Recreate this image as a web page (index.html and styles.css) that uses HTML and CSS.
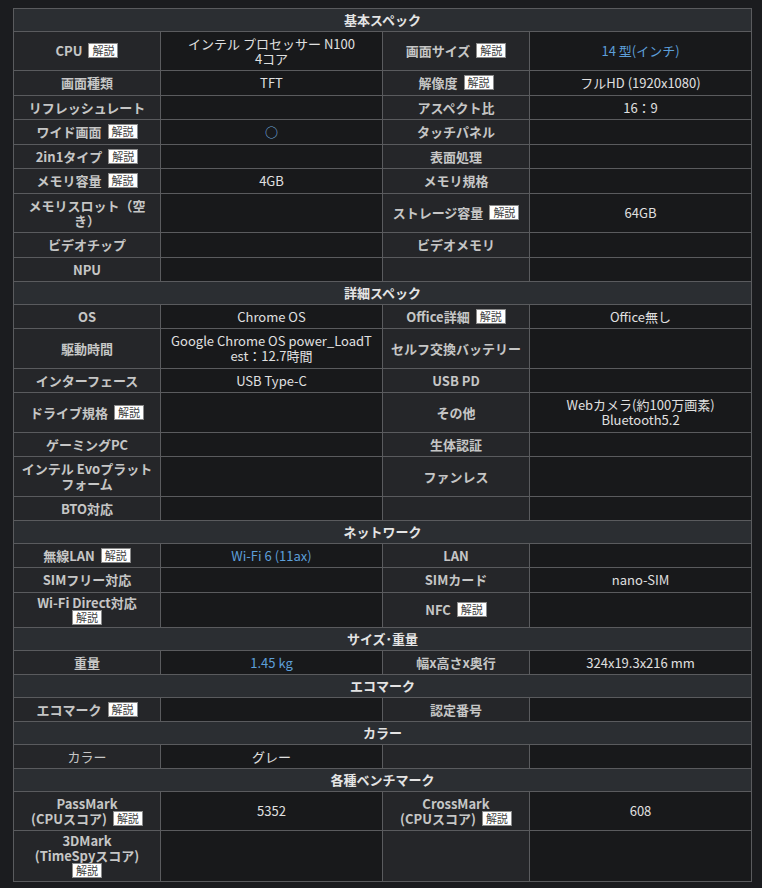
FILE: index.html
```html
<!DOCTYPE html>
<html lang="ja">
<head>
<meta charset="utf-8">
<title>スペック</title>
<link rel="stylesheet" href="styles.css">
</head>
<body>
<table class="spec">
  <colgroup>
    <col class="c-label"><col class="c-value"><col class="c-label"><col class="c-value">
  </colgroup>
  <tbody>
    <tr><th class="sec" colspan="4">基本スペック</th></tr>
    <tr><th>CPU<span class="tip">解説</span></th><td><span class="ln">インテル プロセッサー N100</span><span class="ln">4コア</span></td><th>画面サイズ<span class="tip">解説</span></th><td class="link">14 型(インチ)</td></tr>
    <tr><th>画面種類</th><td>TFT</td><th>解像度<span class="tip">解説</span></th><td>フルHD (1920x1080)</td></tr>
    <tr><th>リフレッシュレート</th><td></td><th>アスペクト比</th><td>16：9</td></tr>
    <tr><th>ワイド画面<span class="tip">解説</span></th><td class="mark">○</td><th>タッチパネル</th><td></td></tr>
    <tr><th>2in1タイプ<span class="tip">解説</span></th><td></td><th>表面処理</th><td></td></tr>
    <tr><th>メモリ容量<span class="tip">解説</span></th><td>4GB</td><th>メモリ規格</th><td></td></tr>
    <tr><th><span class="ln">メモリスロット（空</span><span class="ln">き）</span></th><td></td><th>ストレージ容量<span class="tip">解説</span></th><td>64GB</td></tr>
    <tr><th>ビデオチップ</th><td></td><th>ビデオメモリ</th><td></td></tr>
    <tr><th>NPU</th><td></td><th></th><td></td></tr>
    <tr><th class="sec" colspan="4">詳細スペック</th></tr>
    <tr><th>OS</th><td>Chrome OS</td><th>Office詳細<span class="tip">解説</span></th><td>Office無し</td></tr>
    <tr><th>駆動時間</th><td><span class="ln">Google Chrome OS power_LoadT</span><span class="ln">est：12.7時間</span></td><th>セルフ交換バッテリー</th><td></td></tr>
    <tr><th>インターフェース</th><td>USB Type-C</td><th>USB PD</th><td></td></tr>
    <tr><th>ドライブ規格<span class="tip">解説</span></th><td></td><th>その他</th><td><span class="ln">Webカメラ(約100万画素)</span><span class="ln">Bluetooth5.2</span></td></tr>
    <tr><th>ゲーミングPC</th><td></td><th>生体認証</th><td></td></tr>
    <tr><th><span class="ln">インテル Evoプラット</span><span class="ln">フォーム</span></th><td></td><th>ファンレス</th><td></td></tr>
    <tr><th>BTO対応</th><td></td><th></th><td></td></tr>
    <tr><th class="sec" colspan="4">ネットワーク</th></tr>
    <tr><th>無線LAN<span class="tip">解説</span></th><td class="link">Wi-Fi 6 (11ax)</td><th>LAN</th><td></td></tr>
    <tr><th>SIMフリー対応</th><td></td><th>SIMカード</th><td>nano-SIM</td></tr>
    <tr class="compact"><th><span class="ln">Wi-Fi Direct対応</span><span class="ln"><span class="tip nl">解説</span></span></th><td></td><th>NFC<span class="tip">解説</span></th><td></td></tr>
    <tr><th class="sec" colspan="4">サイズ･重量</th></tr>
    <tr><th>重量</th><td class="link">1.45 kg</td><th>幅x高さx奥行</th><td>324x19.3x216 mm</td></tr>
    <tr><th class="sec" colspan="4">エコマーク</th></tr>
    <tr><th>エコマーク<span class="tip">解説</span></th><td></td><th>認定番号</th><td></td></tr>
    <tr><th class="sec" colspan="4">カラー</th></tr>
    <tr><th class="plain">カラー</th><td>グレー</td><th></th><td></td></tr>
    <tr><th class="sec" colspan="4">各種ベンチマーク</th></tr>
    <tr><th><span class="ln">PassMark</span><span class="ln">(CPUスコア)<span class="tip">解説</span></span></th><td>5352</td><th><span class="ln">CrossMark</span><span class="ln">(CPUスコア)<span class="tip">解説</span></span></th><td>608</td></tr>
    <tr class="compact"><th><span class="ln">3DMark</span><span class="ln">(TimeSpyスコア)</span><span class="ln"><span class="tip nl">解説</span></span></th><td></td><th></th><td></td></tr>
  </tbody>
</table>
</body>
</html>
```

FILE: styles.css
```css
html, body {
  margin: 0;
  padding: 0;
  background: #1b1c1f;
}
body {
  padding: 8px 10px 0 13px;
  font-family: "Noto Sans CJK JP", "Noto Sans", sans-serif;
  font-size: 13px;
  color: #e2e2e2;
}
.spec {
  width: 739px;
  border-collapse: collapse;
  table-layout: fixed;
}
.c-label { width: 147px; }
.c-value { width: 222px; }
.spec th, .spec td {
  border: 1px solid #5a5b5e;
  padding: 4px 3px 4.5px;
  line-height: 15px;
  text-align: center;
  vertical-align: middle;
}
.spec .compact th, .spec .compact td {
  padding-top: 2px;
  padding-bottom: 2.5px;
}
.ln {
  display: block;
}
.spec th {
  background: #252629;
  color: #c6c6c6;
  font-weight: bold;
}
.spec th.plain {
  font-weight: normal;
}
.spec td {
  background: #18191b;
  color: #e0e0e0;
  font-weight: normal;
}
.spec th.sec {
  background: #2b2e32;
  color: #e4e4e4;
  padding: 3px 3px 3.5px;
}
.spec td.link {
  color: #5d9fd9;
}
.spec td.mark {
  color: #6ea3d8;
  font-weight: bold;
}
.tip {
  display: inline-block;
  margin-left: 6px;
  padding: 0 3px;
  background: #ffffff;
  border: 1px solid #8a8a8a;
  color: #444;
  font-size: 11px;
  font-weight: normal;
  line-height: 13px;
  vertical-align: top;
}
.tip.nl {
  margin-left: 0;
}
```
